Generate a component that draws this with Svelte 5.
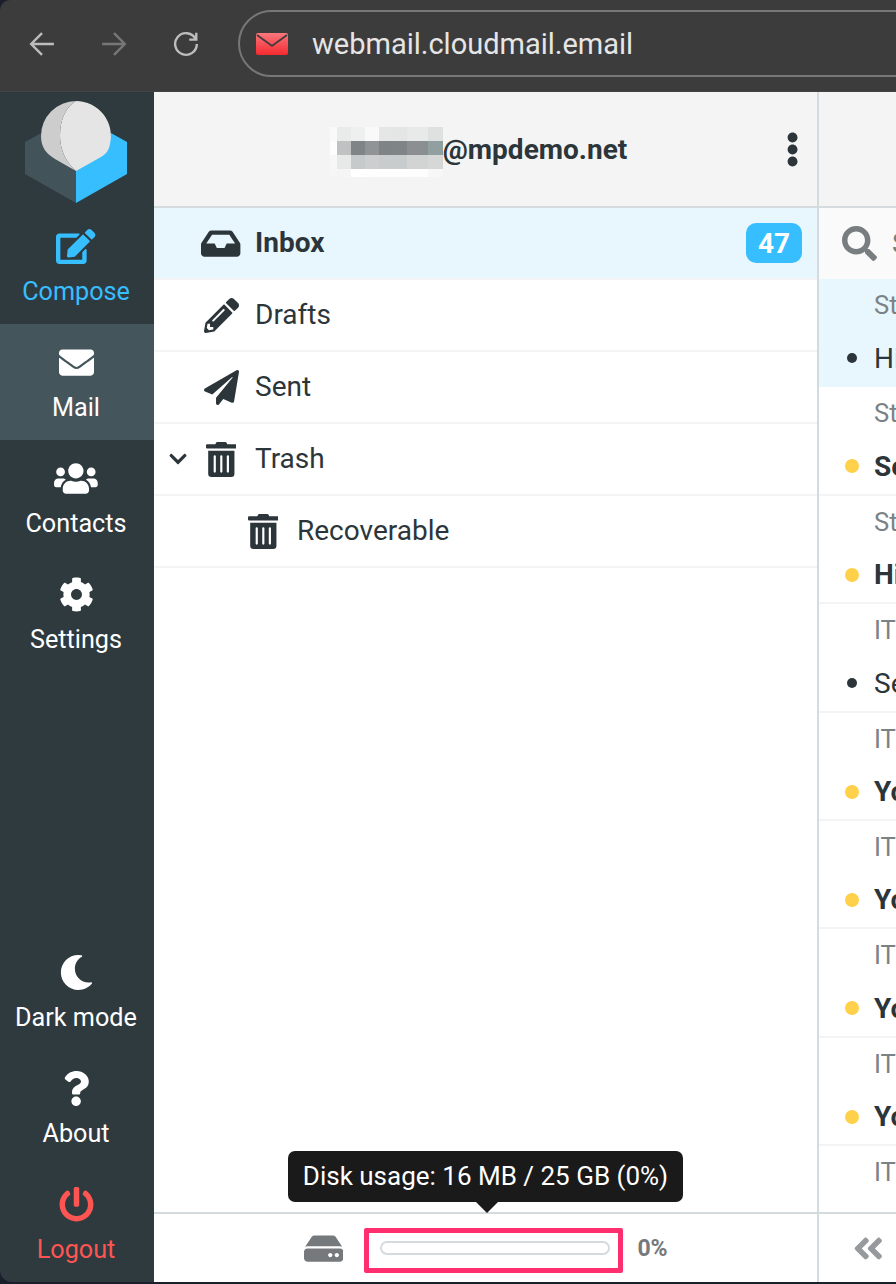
<script>
	const icons = {
		inbox: [576, 'M567.938 243.908L462.25 85.374A48.003 48.003 0 0 0 422.311 64H153.689a48 48 0 0 0-39.938 21.374L8.062 243.908A47.994 47.994 0 0 0 0 270.533V400c0 26.51 21.49 48 48 48h480c26.51 0 48-21.49 48-48V270.533a47.994 47.994 0 0 0-8.062-26.625zM162.252 128h251.497l85.333 128H376l-32 64H232l-32-64H76.918l85.334-128z'],
		pencil: [512, 'M497.9 142.1l-46.1 46.1c-4.7 4.7-12.3 4.7-17 0l-111-111c-4.7-4.7-4.7-12.3 0-17l46.1-46.1c18.7-18.7 49.1-18.7 67.9 0l60.1 60.1c18.8 18.7 18.8 49.1 0 67.9zM284.2 99.8L21.6 362.4.4 483.9c-2.9 16.4 11.4 30.6 27.8 27.8l121.5-21.3 262.6-262.6c4.7-4.7 4.7-12.3 0-17l-111-111c-4.8-4.7-12.4-4.7-17.1 0zM124.1 339.9c-5.5-5.5-5.5-14.3 0-19.8l154-154c5.5-5.5 14.3-5.5 19.8 0s5.5 14.3 0 19.8l-154 154c-5.5 5.5-14.3 5.5-19.8 0zM88 424h48v36.3l-64.5 11.3-31.1-31.1L51.7 376H88v48z'],
		plane: [512, 'M476 3.2L12.5 270.6c-18.1 10.4-15.8 35.6 2.2 43.2L121 358.4l287.3-253.2c5.5-4.9 13.3 2.6 8.6 8.3L176 407v80.5c0 23.6 28.5 32.9 42.5 15.8L282 426l124.6 52.2c14.2 6 30.4-2.9 33-18.2l72-432C515 7.8 493.3-6.8 476 3.2z'],
		trash: [448, 'M32 464a48 48 0 0 0 48 48h288a48 48 0 0 0 48-48V128H32zm272-256a16 16 0 0 1 32 0v224a16 16 0 0 1-32 0zm-96 0a16 16 0 0 1 32 0v224a16 16 0 0 1-32 0zm-96 0a16 16 0 0 1 32 0v224a16 16 0 0 1-32 0zM432 32H312l-9.4-18.7A24 24 0 0 0 281.1 0H166.8a23.72 23.72 0 0 0-21.4 13.3L136 32H16A16 16 0 0 0 0 48v32a16 16 0 0 0 16 16h416a16 16 0 0 0 16-16V48a16 16 0 0 0-16-16z'],
		envelope: [512, 'M502.3 190.8c3.9-3.1 9.7-.2 9.7 4.7V400c0 26.5-21.5 48-48 48H48c-26.5 0-48-21.5-48-48V195.6c0-5 5.7-7.8 9.7-4.7 22.4 17.4 52.1 39.5 154.1 113.6 21.1 15.4 56.7 47.8 92.2 47.6 35.7.3 72-32.8 92.3-47.6 102-74.1 131.6-96.3 154-113.7zM256 320c23.2.4 56.6-29.2 73.4-41.4 132.7-96.3 142.8-104.7 173.4-128.7 5.8-4.5 9.2-11.5 9.2-18.9v-19c0-26.5-21.5-48-48-48H48C21.5 64 0 85.5 0 112v19c0 7.4 3.4 14.3 9.2 18.9 30.6 23.9 40.7 32.4 173.4 128.7 16.8 12.2 50.2 41.8 73.4 41.4z'],
		users: [640, 'M96 224c35.3 0 64-28.7 64-64s-28.7-64-64-64-64 28.7-64 64 28.7 64 64 64zm448 0c35.3 0 64-28.7 64-64s-28.7-64-64-64-64 28.7-64 64 28.7 64 64 64zm32 32h-64c-17.6 0-33.5 7.1-45.1 18.6 40.3 22.1 68.9 62 75.1 109.4h66c17.7 0 32-14.3 32-32v-32c0-35.3-28.7-64-64-64zm-256 0c61.9 0 112-50.1 112-112S381.9 32 320 32 208 82.1 208 144s50.1 112 112 112zm76.8 32h-8.3c-20.8 10-43.9 16-68.5 16s-47.6-6-68.5-16h-8.3C179.6 288 128 339.6 128 403.2V432c0 26.5 21.5 48 48 48h288c26.5 0 48-21.5 48-48v-28.8c0-63.6-51.6-115.2-115.2-115.2zm-223.7-13.4C161.5 263.1 145.6 256 128 256H64c-35.3 0-64 28.7-64 64v32c0 17.7 14.3 32 32 32h65.9c6.3-47.4 34.9-87.3 75.2-109.4z'],
		cog: [512, 'M487.4 315.7l-42.6-24.6c4.3-23.2 4.3-47 0-70.2l42.6-24.6c4.9-2.8 7.1-8.6 5.5-14-11.1-35.6-30-67.8-54.7-94.6-3.8-4.1-10-5.1-14.8-2.3L380.8 110c-17.9-15.4-38.5-27.3-60.8-35.1V25.8c0-5.6-3.9-10.5-9.4-11.7-36.7-8.2-74.3-7.8-109.2 0-5.5 1.2-9.4 6.1-9.4 11.7V75c-22.2 7.9-42.8 19.8-60.8 35.1L88.7 85.5c-4.9-2.8-11-1.9-14.8 2.3-24.7 26.7-43.6 58.9-54.7 94.6-1.7 5.4.6 11.2 5.5 14L67.3 221c-4.3 23.2-4.3 47 0 70.2l-42.6 24.6c-4.9 2.8-7.1 8.6-5.5 14 11.1 35.6 30 67.8 54.7 94.6 3.8 4.1 10 5.1 14.8 2.3l42.6-24.6c17.9 15.4 38.5 27.3 60.8 35.1v49.2c0 5.6 3.9 10.5 9.4 11.7 36.7 8.2 74.3 7.8 109.2 0 5.5-1.2 9.4-6.1 9.4-11.7v-49.2c22.2-7.9 42.8-19.8 60.8-35.1l42.6 24.6c4.9 2.8 11 1.9 14.8-2.3 24.7-26.7 43.6-58.9 54.7-94.6 1.5-5.5-.7-11.3-5.6-14.1zM256 336c-44.1 0-80-35.9-80-80s35.9-80 80-80 80 35.9 80 80-35.9 80-80 80z'],
		moon: [512, 'M283.211 512c78.962 0 151.079-35.925 198.857-94.792 7.068-8.708-.639-21.43-11.562-19.35-124.203 23.654-238.262-71.576-238.262-196.954 0-72.222 38.662-138.635 101.498-174.394 9.686-5.512 7.25-20.197-3.756-22.23A258.156 258.156 0 0 0 283.211 0c-141.309 0-256 114.511-256 256 0 141.309 114.511 256 256 256z'],
		question: [384, 'M202.021 0C122.202 0 70.503 32.703 29.914 91.026c-7.363 10.58-5.093 25.086 5.178 32.874l43.138 32.709c10.373 7.865 25.132 6.026 33.253-4.148 25.049-31.381 43.63-49.449 82.757-49.449 30.764 0 68.816 19.799 68.816 49.631 0 22.552-18.617 34.134-48.993 51.164-35.423 19.86-82.299 44.576-82.299 106.405V320c0 13.255 10.745 24 24 24h72.471c13.255 0 24-10.745 24-24v-5.773c0-42.86 125.268-44.645 125.268-160.627C377.504 66.256 286.902 0 202.021 0zM192 373.459c-38.196 0-69.271 31.075-69.271 69.271 0 38.195 31.075 69.27 69.271 69.27s69.271-31.075 69.271-69.271-31.075-69.27-69.271-69.27z'],
		power: [512, 'M400 54.1c63 45 104 118.6 104 201.9 0 136.8-110.8 247.7-247.5 248C120 504.3 8.2 393 8 256.4 7.9 173.1 48.9 99.3 111.8 54.2c11.7-8.3 28-4.8 35 7.7L162.6 90c5.9 10.5 3.1 23.8-6.6 31-41.5 30.8-68 79.6-68 134.9-.1 92.3 74.5 168.1 168 168.1 91.6 0 168.6-74.2 168-169.1-.3-51.8-24.7-101.8-68.1-134-9.7-7.2-12.4-20.5-6.5-30.9l15.8-28.1c7-12.4 23.2-16.1 34.8-7.8zM296 264V24c0-13.3-10.7-24-24-24h-32c-13.3 0-24 10.7-24 24v240c0 13.3 10.7 24 24 24h32c13.3 0 24-10.7 24-24z'],
		edit: [576, 'M402.6 83.2l90.2 90.2c3.8 3.8 3.8 10 0 13.8L274.4 405.6l-92.8 10.3c-12.4 1.4-22.9-9.1-21.5-21.5l10.3-92.8L388.8 83.2c3.8-3.8 10-3.8 13.8 0zm162-22.9l-48.8-48.8c-15.2-15.2-39.9-15.2-55.2 0l-35.4 35.4c-3.8 3.8-3.8 10 0 13.8l90.2 90.2c3.8 3.8 10 3.8 13.8 0l35.4-35.4c15.2-15.3 15.2-40 0-55.2zM384 346.2V448H64V128h229.8c3.2 0 6.2-1.3 8.5-3.5l40-40c7.6-7.6 2.2-20.5-8.5-20.5H48C21.5 64 0 85.5 0 112v352c0 26.5 21.5 48 48 48h352c26.5 0 48-21.5 48-48V306.2c0-10.7-12.9-16-20.5-8.5l-40 40c-2.2 2.3-3.5 5.3-3.5 8.5z'],
		search: [512, 'M505 442.7L405.3 343c-4.5-4.5-10.6-7-17-7H372c27.6-35.3 44-79.7 44-128C416 93.1 322.9 0 208 0S0 93.1 0 208s93.1 208 208 208c48.3 0 92.7-16.4 128-44v16.3c0 6.4 2.5 12.5 7 17l99.7 99.7c9.4 9.4 24.6 9.4 33.9 0l28.3-28.3c9.4-9.4 9.4-24.6.1-34zM208 336c-70.7 0-128-57.2-128-128 0-70.7 57.2-128 128-128 70.7 0 128 57.2 128 128 0 70.7-57.2 128-128 128z'],
		dots: [192, 'M96 184c39.8 0 72 32.2 72 72s-32.2 72-72 72-72-32.2-72-72 32.2-72 72-72zM24 80c0 39.8 32.2 72 72 72s72-32.2 72-72S135.800 8 96 8 24 40.200 24 80zm0 352c0 39.8 32.2 72 72 72s72-32.2 72-72-32.2-72-72-72-72 32.200-72 72z'],
		chevron: [448, 'M207.029 381.476L12.686 187.132c-9.373-9.373-9.373-24.569 0-33.941l22.667-22.667c9.357-9.357 24.522-9.375 33.901-.04L224 284.505l154.745-154.021c9.379-9.335 24.544-9.317 33.901.04l22.667 22.667c9.373 9.373 9.373 24.569 0 33.941L240.971 381.476c-9.373 9.372-24.569 9.372-33.942 0z'],
		hdd: [576, 'M576 304v96c0 26.51-21.49 48-48 48H48c-26.51 0-48-21.49-48-48v-96c0-26.51 21.49-48 48-48h480c26.51 0 48 21.49 48 48zm-48-80a79.557 79.557 0 0 1 30.777 6.165L462.25 85.374A48.003 48.003 0 0 0 422.311 64H153.689a48 48 0 0 0-39.938 21.374L17.223 230.165A79.557 79.557 0 0 1 48 224h480zm-48 96c-17.673 0-32 14.327-32 32s14.327 32 32 32 32-14.327 32-32-14.327-32-32-32zm-96 0c-17.673 0-32 14.327-32 32s14.327 32 32 32 32-14.327 32-32-14.327-32-32-32z'],
		collapse: [448, 'M223.7 239l136-136c9.4-9.4 24.6-9.4 33.9 0l22.6 22.6c9.4 9.4 9.4 24.6 0 33.9L319.9 256l96.4 96.4c9.4 9.4 9.4 24.6 0 33.9L393.7 409c-9.4 9.4-24.6 9.4-33.9 0l-136-136c-9.5-9.4-9.5-24.6-.1-34zm-192 34l136 136c9.4 9.4 24.6 9.4 33.9 0l22.6-22.6c9.4-9.4 9.4-24.6 0-33.9L127.900 256l96.4-96.4c9.4-9.4 9.4-24.6 0-33.9L201.700 103c-9.400-9.400-24.600-9.400-33.900 0l-136 136c-9.500 9.400-9.500 24.600-.1 34z'],
	};

	const navTop = [
		{ label: 'Compose', icon: 'edit', cls: 'compose' },
		{ label: 'Mail', icon: 'envelope', cls: 'active' },
		{ label: 'Contacts', icon: 'users' },
		{ label: 'Settings', icon: 'cog' },
	];
	const navBottom = [
		{ label: 'Dark mode', icon: 'moon' },
		{ label: 'About', icon: 'question' },
		{ label: 'Logout', icon: 'power', cls: 'logout' },
	];
	const folders = [
		{ name: 'Inbox', icon: 'inbox', active: true, count: 47 },
		{ name: 'Drafts', icon: 'pencil' },
		{ name: 'Sent', icon: 'plane' },
		{ name: 'Trash', icon: 'trash', open: true },
		{ name: 'Recoverable', icon: 'trash', sub: true },
	];
	const messages = [
		{ from: 'Staff', subject: 'Hi', selected: true },
		{ from: 'Staff', subject: 'Send', unread: true },
		{ from: 'Staff', subject: 'Hi', unread: true },
		{ from: 'IT Support', subject: 'Security' },
		{ from: 'IT Support', subject: 'Your', unread: true },
		{ from: 'IT Support', subject: 'Your', unread: true },
		{ from: 'IT Support', subject: 'Your', unread: true },
		{ from: 'IT Support', subject: 'Your', unread: true },
		{ from: 'IT Support', subject: 'Your', unread: true },
	];
	// the blurred-out account name, 14px mosaic
	const mosaic = [
		['#f9f9f9', '#e9eaea', '#eeefef', '#f9f9f9', '#e5e7e7', '#e4e6e6', '#e8e9e9', '#dfe1e1'],
		['#fdfdfd', '#bfc1c2', '#7f8486', '#909495', '#7e8385', '#7f8486', '#8b8f91', '#90a0a0'],
		['#f7f7f7', '#e7e8e8', '#c7cacb', '#cccecf', '#c9cccc', '#c9cccc', '#d2d4d4', '#d6d8d8'],
		['#f6f6f6', '#f5f5f5', '#ffffff', '#fefefe', '#fefefe', '#fefefe', '#fdfdfd', '#f7f7f7'],
	];
</script>

{#snippet icon(name, size, cls = '')}
	<svg class='fa {cls}' viewBox='0 0 {icons[name][0]} 512' height={size} width={size * icons[name][0] / 512}>
		<path d={icons[name][1]} />
	</svg>
{/snippet}

{#snippet navItem(item)}
	<a class='nav-item {item.cls || ''}' href='#top'>
		{@render icon(item.icon, 35)}
		<span>{item.label}</span>
	</a>
{/snippet}

<div class='window'>
	<div class='browser'>
		<div class='browser-btn'>
			<svg viewBox='0 0 24 24' width='26' height='26'><path d='M23 12H2M12 2 2 12l10 10' /></svg>
		</div>
		<div class='browser-btn off'>
			<svg viewBox='0 0 24 24' width='26' height='26'><path d='M1 12h21M12 2l10 10-10 10' /></svg>
		</div>
		<div class='browser-btn'>
			<svg viewBox='0 0 24 24' width='26' height='26'><path d='M20.660 7A10 10 0 1 0 22 12M21.500 1.500V8H15' /></svg>
		</div>
		<div class='url'>
			<svg class='favicon' viewBox='0 0 32 22' width='32' height='22'>
				<defs>
					<linearGradient id='fav' x1='0' x2='0' y1='0' y2='1'>
						<stop offset='0' stop-color='#f9777c' />
						<stop offset='1' stop-color='#f52a30' />
					</linearGradient>
				</defs>
				<rect width='32' height='22' rx='2' fill='url(#fav)' />
				<path d='M1 2l15 11L31 2' fill='none' stroke='#3d3d3d' stroke-width='1.800' />
			</svg>
			<span>webmail.cloudmail.email</span>
		</div>
	</div>

	<div class='app'>
		<nav class='sidebar'>
			<div class='logo'>
				<svg viewBox='0 0 102 102' width='102' height='102'>
					<path d='M0 41 16 32 51 70V102L0 73Z' fill='#43535a' />
					<path d='M51 70 86 32 102 41V73L51 102Z' fill='#37beff' />
					<path d='M51 0A35 35 0 0 1 85 43C84 49 81 53 76 56L51 70C41 61 35 49 35 35 35 18 41 6 51 0Z' fill='#e5e5e5' />
					<path d='M51 0A35 35 0 0 0 16 35C16 47 22 53 30 58L51 70C41 61 35 49 35 35 35 18 41 6 51 0Z' fill='#cdcdcd' />
				</svg>
			</div>
			{#each navTop as item}
				{@render navItem(item)}
			{/each}
			<div class='spacer'></div>
			{#each navBottom as item}
				{@render navItem(item)}
			{/each}
		</nav>

		<section class='folders'>
			<header class='account'>
				<div class='account-name'>
					<div class='mosaic'>
						{#each mosaic.flat() as c}
							<i style='background:{c}'></i>
						{/each}
					</div>
					<span>@mpdemo.net</span>
				</div>
				{@render icon('dots', 35, 'menu')}
			</header>

			<ul class='folder-list'>
				{#each folders as f}
					<li class:active={f.active} class:sub={f.sub}>
						{#if f.open}
							{@render icon('chevron', 20, 'chev')}
						{/if}
						<div class='folder-icon'>{@render icon(f.icon, 35)}</div>
						<span class='name'>{f.name}</span>
						{#if f.count}
							<span class='badge'>{f.count}</span>
						{/if}
					</li>
				{/each}
			</ul>

			<footer class='quota'>
				<div class='tooltip'>Disk usage: 16 MB / 25 GB (0%)</div>
				{@render icon('hdd', 35, 'hdd')}
				<div class='quota-box'>
					<div class='quota-bar'></div>
				</div>
				<span class='pct'>0%</span>
			</footer>
		</section>

		<section class='list'>
			<header class='list-head'></header>
			<div class='search'>
				{@render icon('search', 35)}
				<span>Search</span>
			</div>
			<div class='messages'>
				{#each messages as m}
					<div class='msg' class:selected={m.selected} class:unread={m.unread}>
						<span class='from'>{m.from}</span>
						<span class='dot'></span>
						<span class='subject'>{m.subject}</span>
					</div>
				{/each}
			</div>
			<footer class='list-foot'>
				{@render icon('collapse', 35)}
			</footer>
		</section>
	</div>
</div>

<style>
:global(body) {
	background: #1b1f2b;
}

.window {
	width: 896px;
	height: 1282px;
	display: flex;
	flex-direction: column;
	overflow: hidden;
	border-radius: 10px 0 0 12px;
	font-family: Roboto, sans-serif;
	color: #2c363a;
}

.fa {
	fill: currentColor;
	flex: none;
	display: block;
}

/* browser chrome */
.browser {
	height: 92px;
	flex: none;
	box-sizing: border-box;
	padding: 10px 0 14px 29px;
	background: #3c3c3c;
	border-bottom: 1px solid #444;
	display: flex;
	align-items: center;
}

.browser-btn {
	width: 72px;
	color: #bdbdbd;
}

.browser-btn.off {
	color: #777;
}

.browser-btn svg {
	display: block;
	fill: none;
	stroke: currentColor;
	stroke-width: 2.200;
}

.url {
	margin-left: -7px;
	flex: 1;
	height: 67px;
	box-sizing: border-box;
	margin-right: -40px;
	border: 2px solid #777;
	border-radius: 34px;
	display: flex;
	align-items: center;
	padding-left: 16px;
	gap: 24px;
	color: #e6e6e6;
	font-size: 29px;
}

.favicon {
	flex: none;
}

/* left rail */
.app {
	flex: 1;
	display: flex;
	min-height: 0;
}

.sidebar {
	width: 154px;
	flex: none;
	display: flex;
	flex-direction: column;
	background: #2f3a3f;
}

.logo {
	height: 116px;
	flex: none;
	box-sizing: border-box;
	display: flex;
	align-items: center;
	padding: 4px 0 0 25px;
}

.spacer {
	flex: 1;
}

.nav-item {
	height: 116px;
	flex: none;
	display: flex;
	flex-direction: column;
	align-items: center;
	gap: 13px;
	color: #fff;
	text-decoration: none;
	font-size: 25.200px;
	line-height: 30px;
	padding: 21px 2px 0 0;
	box-sizing: border-box;
}

.nav-item.compose {
	color: #37beff;
}

.nav-item.active {
	background: #45555c;
}

.nav-item.logout {
	color: #ff5552;
}

/* folders */
.folders {
	width: 665px;
	flex: none;
	box-sizing: border-box;
	border-right: 2px solid #d4dbde;
	display: flex;
	flex-direction: column;
	background: #fff;
}

.account {
	height: 116px;
	flex: none;
	box-sizing: border-box;
	background: #f4f4f4;
	border-bottom: 2px solid #d4dbde;
	display: flex;
	align-items: center;
	justify-content: center;
	position: relative;
}

.account-name {
	display: flex;
	align-items: center;
	font-size: 28px;
	font-weight: 700;
	margin-left: -14px;
}

.mosaic {
	display: grid;
	grid-template-columns: 7px repeat(5, 14px) 21px 15px;
	grid-template-rows: 14px 14px 14px 8px;
	margin-top: 6px;
}

.mosaic i {
	display: block;
}

.account :global(.menu) {
	position: absolute;
	right: 18px;
	top: 40px;
}

.folder-list {
	flex: 1;
	list-style: none;
	margin: 0;
	padding: 0;
	min-height: 0;
}

.folder-list li {
	height: 72px;
	box-sizing: border-box;
	border-bottom: 2px solid #f4f4f4;
	display: flex;
	align-items: center;
	padding: 0 15px 0 47px;
	font-size: 28px;
	position: relative;
}

.folder-list .name {
	margin-top: -2px;
}

.folder-list li.active {
	background: #e8f6fd;
	font-weight: 700;
}

.folder-list li.sub {
	padding-left: 89px;
}

.folder-list :global(.chev) {
	position: absolute;
	left: 15px;
	top: 25px;
	width: 18px;
}

.folder-icon {
	width: 40px;
	display: flex;
	justify-content: center;
	margin-right: 14px;
}

.badge {
	margin-left: auto;
	width: 56px;
	height: 40px;
	border-radius: 10px;
	background: #37beff;
	color: #fff;
	display: flex;
	align-items: center;
	justify-content: center;
}

.quota {
	height: 70px;
	flex: none;
	box-sizing: border-box;
	border-top: 2px solid #d4dbde;
	display: flex;
	align-items: center;
	padding-left: 150px;
	position: relative;
	color: #75797b;
}

.tooltip {
	position: absolute;
	left: 134px;
	bottom: 80px;
	width: 395px;
	height: 51px;
	display: flex;
	align-items: center;
	justify-content: center;
	box-sizing: border-box;
	padding-bottom: 2px;
	background: #1a1a1a;
	border-radius: 7px;
	color: #fff;
	font-size: 26px;
	white-space: nowrap;
}

.tooltip::after {
	content: '';
	position: absolute;
	left: 188px;
	top: 51px;
	border: 11px solid transparent;
	border-top-color: #1a1a1a;
	border-bottom: 0;
}

.quota-box {
	margin-left: 21px;
	width: 259px;
	height: 45px;
	box-sizing: border-box;
	border: 5px solid #ff2e6e;
	border-radius: 2px;
	padding: 8px 8px 0 11px;
	margin-top: 4px;
}

.quota-bar {
	height: 14px;
	box-sizing: border-box;
	border: 2px solid #d4dbde;
	border-radius: 7px;
}

.pct {
	margin-left: 14px;
	font-weight: 700;
	font-size: 23px;
}

/* message list */
.list {
	flex: 1;
	min-width: 0;
	display: flex;
	flex-direction: column;
	overflow: hidden;
	background: #fff;
}

.list-head {
	height: 116px;
	flex: none;
	box-sizing: border-box;
	background: #f4f4f4;
	border-bottom: 2px solid #d4dbde;
}

.search {
	height: 71px;
	flex: none;
	background: #fafafa;
	display: flex;
	align-items: center;
	gap: 15px;
	padding-left: 23px;
	color: #787d7f;
	font-size: 28px;
}

.messages {
	flex: 1;
	min-height: 0;
	overflow: hidden;
}

.msg {
	height: 108.400px;
	box-sizing: border-box;
	display: grid;
	grid-template-columns: 55px 1fr;
	grid-template-rows: 52px 54px;
	align-items: center;
	border-bottom: 2px solid #f4f4f4;
	white-space: nowrap;
	font-size: 28px;
}

.msg.selected {
	background: #e8f6fd;
	border-bottom-color: #e8f6fd;
}

.from {
	grid-column: 2;
	grid-row: 1;
	color: #7b8285;
	font-size: 25.600px;
}

.dot {
	grid-column: 1;
	grid-row: 2;
	justify-self: center;
	margin-left: 10px;
	width: 10px;
	height: 10px;
	border-radius: 50%;
	background: #2c363a;
}

.subject {
	grid-column: 2;
	grid-row: 2;
}

.msg.unread .subject {
	font-weight: 700;
}

.msg.unread .dot {
	width: 14px;
	height: 14px;
	background: #ffd04a;
}

.list-foot {
	height: 70px;
	flex: none;
	box-sizing: border-box;
	border-top: 2px solid #d4dbde;
	display: flex;
	align-items: center;
	padding-left: 34px;
	color: #969a9c;
}
</style>
